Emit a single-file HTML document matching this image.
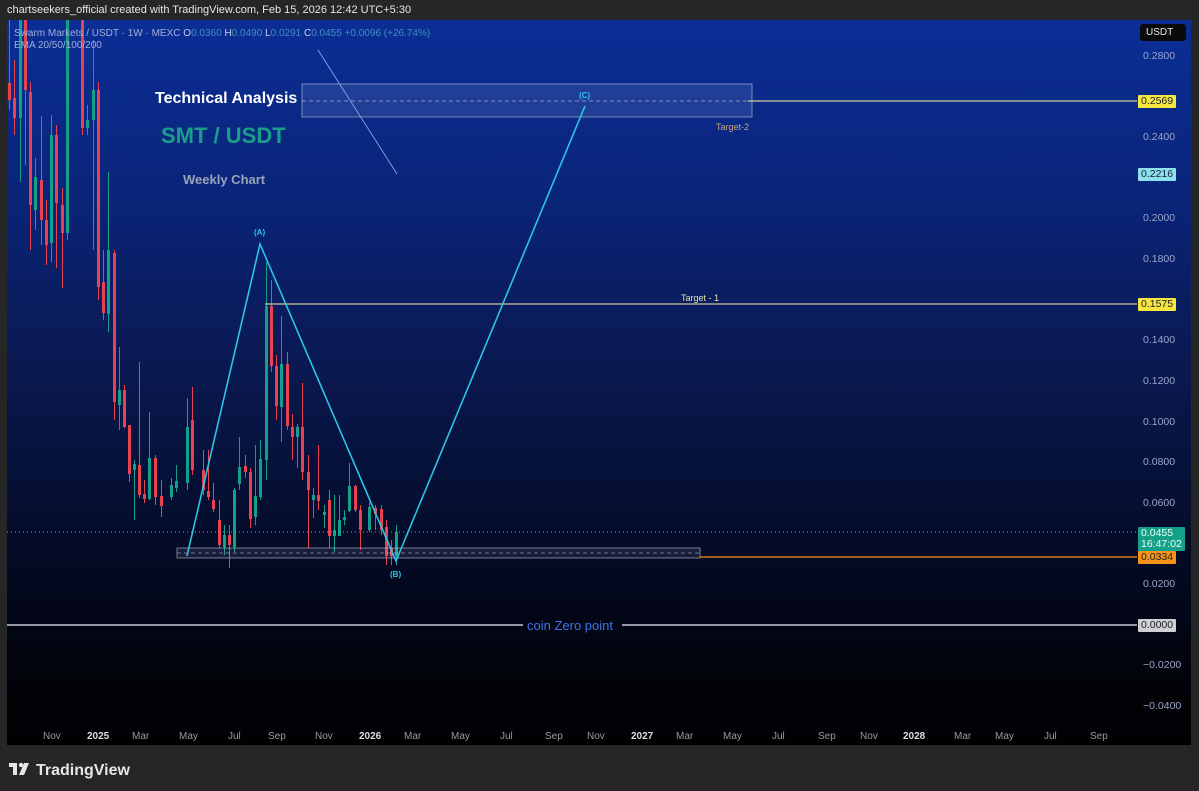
<!DOCTYPE html>
<html><head><meta charset="utf-8">
<style>
html,body{margin:0;padding:0;width:1199px;height:791px;background:#262626;overflow:hidden;font-family:"Liberation Sans",sans-serif;}
#top{position:absolute;left:7px;top:4px;font-size:11px;color:#e6e6e6;}
#chart{position:absolute;left:7px;top:20px;width:1184px;height:725px;background:linear-gradient(180deg,#0b2e96 0%,#0a2478 25%,#0a1a55 45%,#061035 65%,#03071a 80%,#020308 92%,#010104 100%);}
svg{position:absolute;left:0;top:0;}
.r{fill:#e8414f}.g{fill:#12a088}
.rw{stroke:#e8414f;stroke-width:1}.gw{stroke:#12a088;stroke-width:1}
.lab{position:absolute;font-size:10.5px;color:#9aa6c8;left:1143px;}
.tag{position:absolute;left:1138px;font-size:10.5px;padding:1px 3px;line-height:11px;border-radius:1px;}
.ax{position:absolute;top:731px;font-size:10px;color:#9a9a9a;}
.axb{color:#ddd;font-weight:bold;}
</style></head><body>
<div id="top">chartseekers_official created with TradingView.com, Feb 15, 2026 12:42 UTC+5:30</div>
<div id="chart"></div>
<svg width="1199" height="791" viewBox="0 0 1199 791">
<g>
<line class="rw" x1="9.5" y1="20" x2="9.5" y2="110"/><rect class="r" x="8" y="83" width="3" height="17"/>
<line class="rw" x1="14.5" y1="60" x2="14.5" y2="135"/><rect class="r" x="13" y="98" width="3" height="20"/>
<line class="gw" x1="20.5" y1="20" x2="20.5" y2="182"/><rect class="g" x="19" y="20" width="3" height="98"/>
<line class="rw" x1="25.5" y1="20" x2="25.5" y2="165"/><rect class="r" x="24" y="20" width="3" height="70"/>
<line class="rw" x1="30.5" y1="82" x2="30.5" y2="250"/><rect class="r" x="29" y="92" width="3" height="113"/>
<line class="gw" x1="35.5" y1="158" x2="35.5" y2="230"/><rect class="g" x="34" y="177" width="3" height="33"/>
<line class="rw" x1="41.5" y1="116" x2="41.5" y2="245"/><rect class="r" x="40" y="180" width="3" height="40"/>
<line class="rw" x1="46.5" y1="200" x2="46.5" y2="265"/><rect class="r" x="45" y="220" width="3" height="25"/>
<line class="gw" x1="51.5" y1="115" x2="51.5" y2="262"/><rect class="g" x="50" y="135" width="3" height="108"/>
<line class="rw" x1="56.5" y1="125" x2="56.5" y2="268"/><rect class="r" x="55" y="135" width="3" height="68"/>
<line class="rw" x1="62.5" y1="188" x2="62.5" y2="288"/><rect class="r" x="61" y="205" width="3" height="28"/>
<line class="gw" x1="67.5" y1="20" x2="67.5" y2="240"/><rect class="g" x="66" y="20" width="3" height="213"/>
<line class="rw" x1="82.5" y1="20" x2="82.5" y2="135"/><rect class="r" x="81" y="20" width="3" height="108"/>
<line class="gw" x1="87.5" y1="105" x2="87.5" y2="135"/><rect class="g" x="86" y="120" width="3" height="8"/>
<line class="gw" x1="93.5" y1="40" x2="93.5" y2="250"/><rect class="g" x="92" y="90" width="3" height="30"/>
<line class="rw" x1="98.5" y1="82" x2="98.5" y2="300"/><rect class="r" x="97" y="90" width="3" height="197"/>
<line class="rw" x1="103.5" y1="250" x2="103.5" y2="320"/><rect class="r" x="102" y="282" width="3" height="31"/>
<line class="gw" x1="108.5" y1="172" x2="108.5" y2="332"/><rect class="g" x="107" y="250" width="3" height="64"/>
<line class="rw" x1="114.5" y1="250" x2="114.5" y2="420"/><rect class="r" x="113" y="253" width="3" height="149"/>
<line class="gw" x1="119.5" y1="347" x2="119.5" y2="430"/><rect class="g" x="118" y="390" width="3" height="15"/>
<line class="rw" x1="124.5" y1="385" x2="124.5" y2="428"/><rect class="r" x="123" y="390" width="3" height="37"/>
<line class="rw" x1="129.5" y1="425" x2="129.5" y2="482"/><rect class="r" x="128" y="425" width="3" height="49"/>
<line class="gw" x1="134.5" y1="460" x2="134.5" y2="520"/><rect class="g" x="133" y="464" width="3" height="6"/>
<line class="rw" x1="139.5" y1="362" x2="139.5" y2="498"/><rect class="r" x="138" y="465" width="3" height="30"/>
<line class="rw" x1="144.5" y1="480" x2="144.5" y2="503"/><rect class="r" x="143" y="494" width="3" height="5"/>
<line class="gw" x1="149.5" y1="412" x2="149.5" y2="500"/><rect class="g" x="148" y="458" width="3" height="41"/>
<line class="rw" x1="155.5" y1="455" x2="155.5" y2="505"/><rect class="r" x="154" y="458" width="3" height="39"/>
<line class="rw" x1="161.5" y1="480" x2="161.5" y2="517"/><rect class="r" x="160" y="496" width="3" height="10"/>
<line class="gw" x1="171.5" y1="478" x2="171.5" y2="500"/><rect class="g" x="170" y="485" width="3" height="12"/>
<line class="gw" x1="176.5" y1="465" x2="176.5" y2="492"/><rect class="g" x="175" y="481" width="3" height="7"/>
<line class="gw" x1="187.5" y1="398" x2="187.5" y2="490"/><rect class="g" x="186" y="427" width="3" height="56"/>
<line class="rw" x1="192.5" y1="387" x2="192.5" y2="475"/><rect class="r" x="191" y="420" width="3" height="50"/>
<line class="rw" x1="203.5" y1="450" x2="203.5" y2="495"/><rect class="r" x="202" y="470" width="3" height="20"/>
<line class="rw" x1="208.5" y1="450" x2="208.5" y2="500"/><rect class="r" x="207" y="491" width="3" height="6"/>
<line class="rw" x1="213.5" y1="483" x2="213.5" y2="512"/><rect class="r" x="212" y="500" width="3" height="9"/>
<line class="rw" x1="219.5" y1="500" x2="219.5" y2="548"/><rect class="r" x="218" y="520" width="3" height="25"/>
<line class="gw" x1="224.5" y1="525" x2="224.5" y2="555"/><rect class="g" x="223" y="535" width="3" height="12"/>
<line class="rw" x1="229.5" y1="525" x2="229.5" y2="568"/><rect class="r" x="228" y="535" width="3" height="10"/>
<line class="gw" x1="234.5" y1="488" x2="234.5" y2="552"/><rect class="g" x="233" y="490" width="3" height="57"/>
<line class="gw" x1="239.5" y1="437" x2="239.5" y2="490"/><rect class="g" x="238" y="467" width="3" height="17"/>
<line class="rw" x1="245.5" y1="455" x2="245.5" y2="478"/><rect class="r" x="244" y="466" width="3" height="6"/>
<line class="rw" x1="250.5" y1="468" x2="250.5" y2="528"/><rect class="r" x="249" y="472" width="3" height="47"/>
<line class="gw" x1="255.5" y1="445" x2="255.5" y2="525"/><rect class="g" x="254" y="496" width="3" height="21"/>
<line class="gw" x1="260.5" y1="440" x2="260.5" y2="500"/><rect class="g" x="259" y="459" width="3" height="38"/>
<line class="gw" x1="266.5" y1="262" x2="266.5" y2="480"/><rect class="g" x="265" y="306" width="3" height="154"/>
<line class="rw" x1="271.5" y1="280" x2="271.5" y2="372"/><rect class="r" x="270" y="306" width="3" height="60"/>
<line class="rw" x1="276.5" y1="355" x2="276.5" y2="420"/><rect class="r" x="275" y="366" width="3" height="40"/>
<line class="gw" x1="281.5" y1="316" x2="281.5" y2="442"/><rect class="g" x="280" y="364" width="3" height="43"/>
<line class="rw" x1="287.5" y1="352" x2="287.5" y2="430"/><rect class="r" x="286" y="364" width="3" height="62"/>
<line class="rw" x1="292.5" y1="414" x2="292.5" y2="460"/><rect class="r" x="291" y="427" width="3" height="10"/>
<line class="gw" x1="297.5" y1="424" x2="297.5" y2="468"/><rect class="g" x="296" y="427" width="3" height="10"/>
<line class="rw" x1="302.5" y1="383" x2="302.5" y2="480"/><rect class="r" x="301" y="427" width="3" height="45"/>
<line class="rw" x1="308.5" y1="455" x2="308.5" y2="548"/><rect class="r" x="307" y="472" width="3" height="18"/>
<line class="gw" x1="313.5" y1="488" x2="313.5" y2="518"/><rect class="g" x="312" y="495" width="3" height="5"/>
<line class="rw" x1="318.5" y1="445" x2="318.5" y2="510"/><rect class="r" x="317" y="495" width="3" height="6"/>
<line class="gw" x1="324.5" y1="505" x2="324.5" y2="528"/><rect class="g" x="323" y="512" width="3" height="3"/>
<line class="rw" x1="329.5" y1="490" x2="329.5" y2="548"/><rect class="r" x="328" y="500" width="3" height="36"/>
<line class="gw" x1="334.5" y1="495" x2="334.5" y2="552"/><rect class="g" x="333" y="530" width="3" height="6"/>
<line class="gw" x1="339.5" y1="495" x2="339.5" y2="536"/><rect class="g" x="338" y="520" width="3" height="16"/>
<line class="gw" x1="344.5" y1="510" x2="344.5" y2="525"/><rect class="g" x="343" y="517" width="3" height="3"/>
<line class="gw" x1="349.5" y1="463" x2="349.5" y2="512"/><rect class="g" x="348" y="486" width="3" height="25"/>
<line class="rw" x1="355.5" y1="485" x2="355.5" y2="512"/><rect class="r" x="354" y="486" width="3" height="24"/>
<line class="rw" x1="360.5" y1="505" x2="360.5" y2="550"/><rect class="r" x="359" y="510" width="3" height="20"/>
<line class="gw" x1="369.5" y1="502" x2="369.5" y2="532"/><rect class="g" x="368" y="507" width="3" height="23"/>
<line class="rw" x1="375.5" y1="505" x2="375.5" y2="530"/><rect class="r" x="374" y="508" width="3" height="6"/>
<line class="rw" x1="381.5" y1="505" x2="381.5" y2="535"/><rect class="r" x="380" y="509" width="3" height="21"/>
<line class="rw" x1="386.5" y1="520" x2="386.5" y2="565"/><rect class="r" x="385" y="527" width="3" height="29"/>
<line class="rw" x1="391.5" y1="540" x2="391.5" y2="565"/><rect class="r" x="390" y="548" width="3" height="8"/>
<line class="gw" x1="396.5" y1="525" x2="396.5" y2="565"/><rect class="g" x="395" y="532" width="3" height="24"/>
</g>
<line x1="7" y1="532" x2="1137" y2="532" stroke="#8a93a8" stroke-width="1" stroke-dasharray="1 3"/>
<rect x="302" y="84" width="450" height="33" fill="rgba(200,210,255,0.12)" stroke="rgba(190,195,215,0.6)" stroke-width="1"/>
<line x1="302" y1="101" x2="752" y2="101" stroke="rgba(200,205,225,0.6)" stroke-dasharray="4 3"/>
<line x1="748" y1="101" x2="1137" y2="101" stroke="#cfd0a0" stroke-width="1.2"/>
<text x="716" y="130" font-size="9" fill="#c9a47a" font-family="Liberation Sans">Target-2</text>
<line x1="318" y1="50" x2="397" y2="174" stroke="#8fb0e8" stroke-width="0.8"/>
<line x1="265" y1="304" x2="1137" y2="304" stroke="#c9c99c" stroke-width="1.2"/>
<text x="681" y="301" font-size="9" fill="#dfe3b0" font-family="Liberation Sans">Target - 1</text>
<rect x="177" y="548" width="523" height="10" fill="rgba(200,210,255,0.1)" stroke="rgba(190,195,215,0.6)" stroke-width="1"/>
<line x1="177" y1="553" x2="700" y2="553" stroke="rgba(200,205,225,0.5)" stroke-dasharray="4 3"/>
<line x1="700" y1="557" x2="1137" y2="557" stroke="#f7931a" stroke-width="1.2"/>
<line x1="7" y1="625" x2="523" y2="625" stroke="#c8c8d0" stroke-width="1.5"/>
<line x1="622" y1="625" x2="1137" y2="625" stroke="#c8c8d0" stroke-width="1.5"/>
<text x="527" y="630" font-size="13" fill="#3f73e8" font-family="Liberation Sans">coin Zero point</text>
<polyline points="187,556 260,244 396,561 585,106" fill="none" stroke="#2ec4e6" stroke-width="1.6"/>
<text x="254" y="235" font-size="8" fill="#2ec4e6" font-weight="bold" font-family="Liberation Sans">(A)</text>
<text x="390" y="577" font-size="8" fill="#2ec4e6" font-weight="bold" font-family="Liberation Sans">(B)</text>
<text x="579" y="98" font-size="8" fill="#2ec4e6" font-weight="bold" font-family="Liberation Sans">(C)</text>
<text x="155" y="103" font-size="16" fill="#ffffff" font-weight="bold" font-family="Liberation Sans">Technical Analysis</text>
<text x="161" y="143" font-size="22" fill="#1a9e8a" font-weight="bold" font-family="Liberation Sans">SMT / USDT</text>
<text x="183" y="184" font-size="13" fill="#9aa3b8" font-weight="bold" font-family="Liberation Sans">Weekly Chart</text>
<text x="14" y="36" font-size="10" fill="#9fb0d8" font-family="Liberation Sans">Swarm Markets / USDT · 1W · MEXC  <tspan fill="#c8d0e8">O</tspan><tspan fill="#3d8fc0">0.0360</tspan>  <tspan fill="#c8d0e8">H</tspan><tspan fill="#3d8fc0">0.0490</tspan>  <tspan fill="#c8d0e8">L</tspan><tspan fill="#3d8fc0">0.0291</tspan>  <tspan fill="#c8d0e8">C</tspan><tspan fill="#3d8fc0">0.0455  +0.0096 (+26.74%)</tspan></text>
<text x="14" y="48" font-size="10" fill="#9fb0d8" font-family="Liberation Sans">EMA 20/50/100/200</text>
<g fill="#e6e6e6">
<rect x="9" y="763" width="8" height="4"/><rect x="13" y="763" width="4" height="12"/>
<circle cx="21" cy="765" r="2.2"/>
<polygon points="24,763 29,763 24,775 19,775"/>
</g>
<text x="36" y="775" font-size="16" fill="#e6e6e6" font-weight="bold" font-family="Liberation Sans">TradingView</text>
</svg>
<div style="position:absolute;left:1140px;top:24px;width:46px;height:17px;background:#0a0a0c;border-radius:3px;color:#e8e8e8;font-size:10px;line-height:17px;padding-left:6px;box-sizing:border-box;">USDT</div>
<div class="lab" style="top:50px">0.2800</div>
<div class="lab" style="top:131px">0.2400</div>
<div class="lab" style="top:212px">0.2000</div>
<div class="lab" style="top:253px">0.1800</div>
<div class="lab" style="top:334px">0.1400</div>
<div class="lab" style="top:375px">0.1200</div>
<div class="lab" style="top:416px">0.1000</div>
<div class="lab" style="top:456px">0.0800</div>
<div class="lab" style="top:497px">0.0600</div>
<div class="lab" style="top:578px">0.0200</div>
<div class="lab" style="top:659px">−0.0200</div>
<div class="lab" style="top:700px">−0.0400</div>
<div class="tag" style="top:95px;background:#f5e642;color:#222">0.2569</div>
<div class="tag" style="top:168px;background:#8de0ee;color:#123">0.2216</div>
<div class="tag" style="top:298px;background:#f5e642;color:#222">0.1575</div>
<div class="tag" style="top:527px;background:#15a08a;color:#e8fff8;width:41px;line-height:11px">0.0455<br>16:47:02</div>
<div class="tag" style="top:551px;background:#f7931a;color:#222">0.0334</div>
<div class="tag" style="top:619px;background:#cfd0d4;color:#222">0.0000</div>
<div class="ax" style="left:43px">Nov</div>
<div class="ax axb" style="left:87px">2025</div>
<div class="ax" style="left:132px">Mar</div>
<div class="ax" style="left:179px">May</div>
<div class="ax" style="left:228px">Jul</div>
<div class="ax" style="left:268px">Sep</div>
<div class="ax" style="left:315px">Nov</div>
<div class="ax axb" style="left:359px">2026</div>
<div class="ax" style="left:404px">Mar</div>
<div class="ax" style="left:451px">May</div>
<div class="ax" style="left:500px">Jul</div>
<div class="ax" style="left:545px">Sep</div>
<div class="ax" style="left:587px">Nov</div>
<div class="ax axb" style="left:631px">2027</div>
<div class="ax" style="left:676px">Mar</div>
<div class="ax" style="left:723px">May</div>
<div class="ax" style="left:772px">Jul</div>
<div class="ax" style="left:818px">Sep</div>
<div class="ax" style="left:860px">Nov</div>
<div class="ax axb" style="left:903px">2028</div>
<div class="ax" style="left:954px">Mar</div>
<div class="ax" style="left:995px">May</div>
<div class="ax" style="left:1044px">Jul</div>
<div class="ax" style="left:1090px">Sep</div>
</body></html>
